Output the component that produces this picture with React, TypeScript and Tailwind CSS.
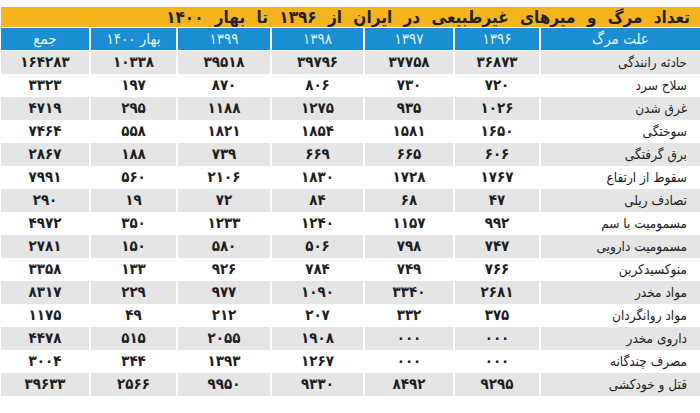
import React from "react";

const rows: string[][] = [
  ["حادثه رانندگی", "۳۶۸۷۳", "۳۷۷۵۸", "۳۹۷۹۶", "۳۹۵۱۸", "۱۰۳۳۸", "۱۶۴۲۸۳"],
  ["سلاح سرد", "۷۲۰", "۷۳۰", "۸۰۶", "۸۷۰", "۱۹۷", "۳۳۲۳"],
  ["غرق شدن", "۱۰۲۶", "۹۳۵", "۱۲۷۵", "۱۱۸۸", "۲۹۵", "۴۷۱۹"],
  ["سوختگی", "۱۶۵۰", "۱۵۸۱", "۱۸۵۴", "۱۸۲۱", "۵۵۸", "۷۴۶۴"],
  ["برق گرفتگی", "۶۰۶", "۶۶۵", "۶۶۹", "۷۳۹", "۱۸۸", "۲۸۶۷"],
  ["سقوط از ارتفاع", "۱۷۶۷", "۱۷۲۸", "۱۸۳۰", "۲۱۰۶", "۵۶۰", "۷۹۹۱"],
  ["تصادف ریلی", "۴۷", "۶۸", "۸۴", "۷۲", "۱۹", "۲۹۰"],
  ["مسمومیت با سم", "۹۹۲", "۱۱۵۷", "۱۲۴۰", "۱۲۳۳", "۳۵۰", "۴۹۷۲"],
  ["مسمومیت دارویی", "۷۴۷", "۷۹۸", "۵۰۶", "۵۸۰", "۱۵۰", "۲۷۸۱"],
  ["منوکسیدکربن", "۷۶۶", "۷۴۹", "۷۸۴", "۹۲۶", "۱۳۳", "۳۳۵۸"],
  ["مواد مخدر", "۲۶۸۱", "۳۳۴۰", "۱۰۹۰", "۹۷۷", "۲۲۹", "۸۳۱۷"],
  ["مواد روانگردان", "۳۷۵", "۳۳۲", "۲۰۷", "۲۱۲", "۴۹", "۱۱۷۵"],
  ["داروی مخدر", "۰۰۰", "۰۰۰", "۱۹۰۸", "۲۰۵۵", "۵۱۵", "۴۴۷۸"],
  ["مصرف چندگانه", "۰۰۰", "۰۰۰", "۱۲۶۷", "۱۳۹۳", "۳۴۴", "۳۰۰۴"],
  ["قتل و خودکشی", "۹۲۹۵", "۸۴۹۲", "۹۳۳۰", "۹۹۵۰", "۲۵۶۶", "۳۹۶۳۳"],
];

const headers = ["علت مرگ", "۱۳۹۶", "۱۳۹۷", "۱۳۹۸", "۱۳۹۹", "بهار ۱۴۰۰", "جمع"];

const grid =
  "grid grid-cols-[1fr_84px_88px_91px_92px_85px_88px] gap-x-[2px]";

export default function App() {
  return (
    <div
      dir="rtl"
      className="w-[700px] h-[413px] bg-white pt-[7px] pl-[1px] overflow-hidden"
      style={{ fontFamily: '"DejaVu Sans Condensed", "DejaVu Sans", sans-serif' }}
    >
      <div className="h-[20px] bg-[#f6b41c] flex items-center pr-[10px] text-[17px] font-bold text-[#222] leading-none [word-spacing:6px]">
        تعداد مرگ و میرهای غیرطبیعی در ایران از ۱۳۹۶ تا بهار ۱۴۰۰
      </div>
      <div className={`${grid} mt-[1px] h-[22px]`}>
        {headers.map((h, i) => (
          <div
            key={i}
            className={`bg-[#1b8ed2] text-[#dff2ff] flex items-center justify-center leading-none ${
              i === 0 ? "text-[15px]" : "text-[15px] tracking-[1px]"
            }`}
          >
            {h}
          </div>
        ))}
      </div>
      <div className="mt-[1px] flex flex-col">
        {rows.map((r, ri) => (
          <div key={ri} className={`${grid} h-[23px]`}>
            {r.map((c, ci) => (
              <div
                key={ci}
                className={`${ri % 2 === 0 ? "bg-[#e5e5e5]" : "bg-white"} text-[#1e1e1e] flex items-center leading-none ${
                  ci === 0 ? "pr-[13px] text-[13.5px]" : "justify-center text-[15px] font-bold tracking-[1px]"
                }`}
              >
                {c}
              </div>
            ))}
          </div>
        ))}
      </div>
    </div>
  );
}
